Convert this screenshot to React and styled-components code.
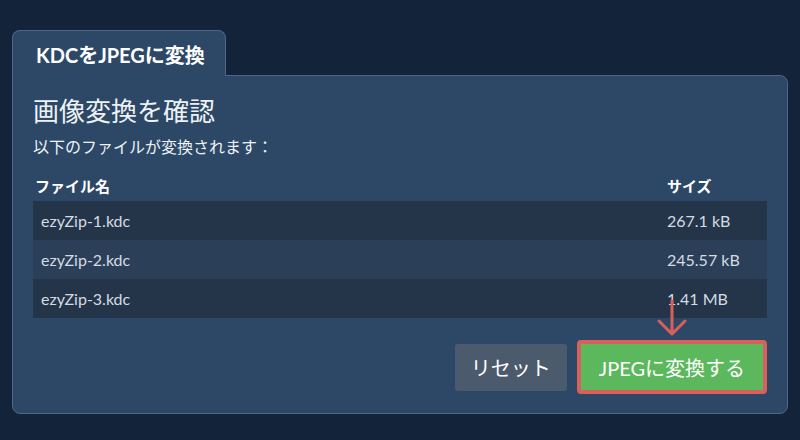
import React from 'react'
import styled, { createGlobalStyle } from 'styled-components'

const GlobalStyle = createGlobalStyle`
  html, body {
    margin: 0;
    padding: 0;
    background: #12233a;
  }
  body {
    font-family: Lato, "Noto Sans CJK JP", sans-serif;
    color: #e8edf3;
  }
`

const Page = styled.div`
  width: 800px;
  height: 440px;
  box-sizing: border-box;
  padding: 30px 12px 0 12px;
`

const Tab = styled.div`
  display: inline-block;
  position: relative;
  z-index: 1;
  box-sizing: border-box;
  height: 46px;
  padding: 0 20px 0 23px;
  margin-bottom: -1px;
  background: #2c4866;
  border: 1px solid #4d6784;
  border-bottom: none;
  border-radius: 8px 8px 0 0;
  font-size: 20px;
  font-weight: 700;
  line-height: 48px;
  color: #ffffff;
`

const Panel = styled.div`
  box-sizing: border-box;
  height: 339px;
  padding: 18px 20px 19px 20px;
  background: #2c4866;
  border: 1px solid #4d6784;
  border-radius: 0 8px 8px 8px;
  display: flex;
  flex-direction: column;
`

const Title = styled.h2`
  margin: 0;
  font-size: 26px;
  font-weight: 400;
  line-height: 34px;
  color: #eef2f6;
`

const Subtitle = styled.p`
  margin: 8px 0 0 0;
  font-size: 16px;
  line-height: 22px;
  color: #eef2f6;
`

const Table = styled.div`
  margin-top: 17px;
  display: flex;
  flex-direction: column;
`

const Row = styled.div`
  display: grid;
  grid-template-columns: 1fr 108px;
  height: ${p => (p.$head ? '26px' : '39px')};
  align-items: ${p => (p.$head ? 'start' : 'center')};
  background: ${p => (p.$head ? 'transparent' : p.$alt ? '#2b4058' : '#243549')};
  font-size: ${p => (p.$head ? '15px' : '16px')};
  line-height: 22px;
  font-weight: ${p => (p.$head ? 700 : 400)};
  color: ${p => (p.$head ? '#ffffff' : '#d4dbe3')};
`

const Cell = styled.div`
  padding-left: ${p => p.$pad || 8}px;
`

const Footer = styled.div`
  margin-top: auto;
  display: flex;
  justify-content: flex-end;
  align-items: center;
  gap: 10px;
`

const Button = styled.button`
  position: relative;
  box-sizing: border-box;
  height: ${p => (p.$primary ? '54px' : '47px')};
  padding: 0 ${p => (p.$primary ? '18px' : '16px')};
  border: ${p => (p.$primary ? '4px solid #d9605a' : 'none')};
  border-radius: ${p => (p.$primary ? '4px' : '3px')};
  background: ${p => (p.$primary ? '#5cb85c' : '#4b5b6d')};
  background-clip: padding-box;
  font-family: Lato, "Noto Sans CJK JP", sans-serif;
  font-size: 20px;
  color: #ffffff;
  cursor: pointer;
`

const Arrow = styled.svg`
  position: absolute;
  left: 50%;
  top: -44px;
  transform: translateX(-50%);
  overflow: visible;
`

const files = [
  { name: 'ezyZip-1.kdc', size: '267.1 kB' },
  { name: 'ezyZip-2.kdc', size: '245.57 kB' },
  { name: 'ezyZip-3.kdc', size: '1.41 MB' },
]

const App = () => {
  return (
    <Page>
      <GlobalStyle />
      <Tab>KDCをJPEGに変換</Tab>
      <Panel>
        <Title>画像変換を確認</Title>
        <Subtitle>以下のファイルが変換されます：</Subtitle>
        <Table>
          <Row $head>
            <Cell $pad={2}>ファイル名</Cell>
            <Cell $pad={8}>サイズ</Cell>
          </Row>
          {files.map((f, i) => (
            <Row key={f.name} $alt={i % 2 === 1}>
              <Cell>{f.name}</Cell>
              <Cell>{f.size}</Cell>
            </Row>
          ))}
        </Table>
        <Footer>
          <Button>リセット</Button>
          <Button $primary>
            <Arrow width="30" height="36" viewBox="0 0 30 36">
              <path
                d="M15 1 V34 M2 21 L15 34 L28 21"
                fill="none"
                stroke="#d9605a"
                strokeWidth="3"
                strokeLinecap="round"
                strokeLinejoin="round"
              />
            </Arrow>
            JPEGに変換する
          </Button>
        </Footer>
      </Panel>
    </Page>
  )
}

export default App
